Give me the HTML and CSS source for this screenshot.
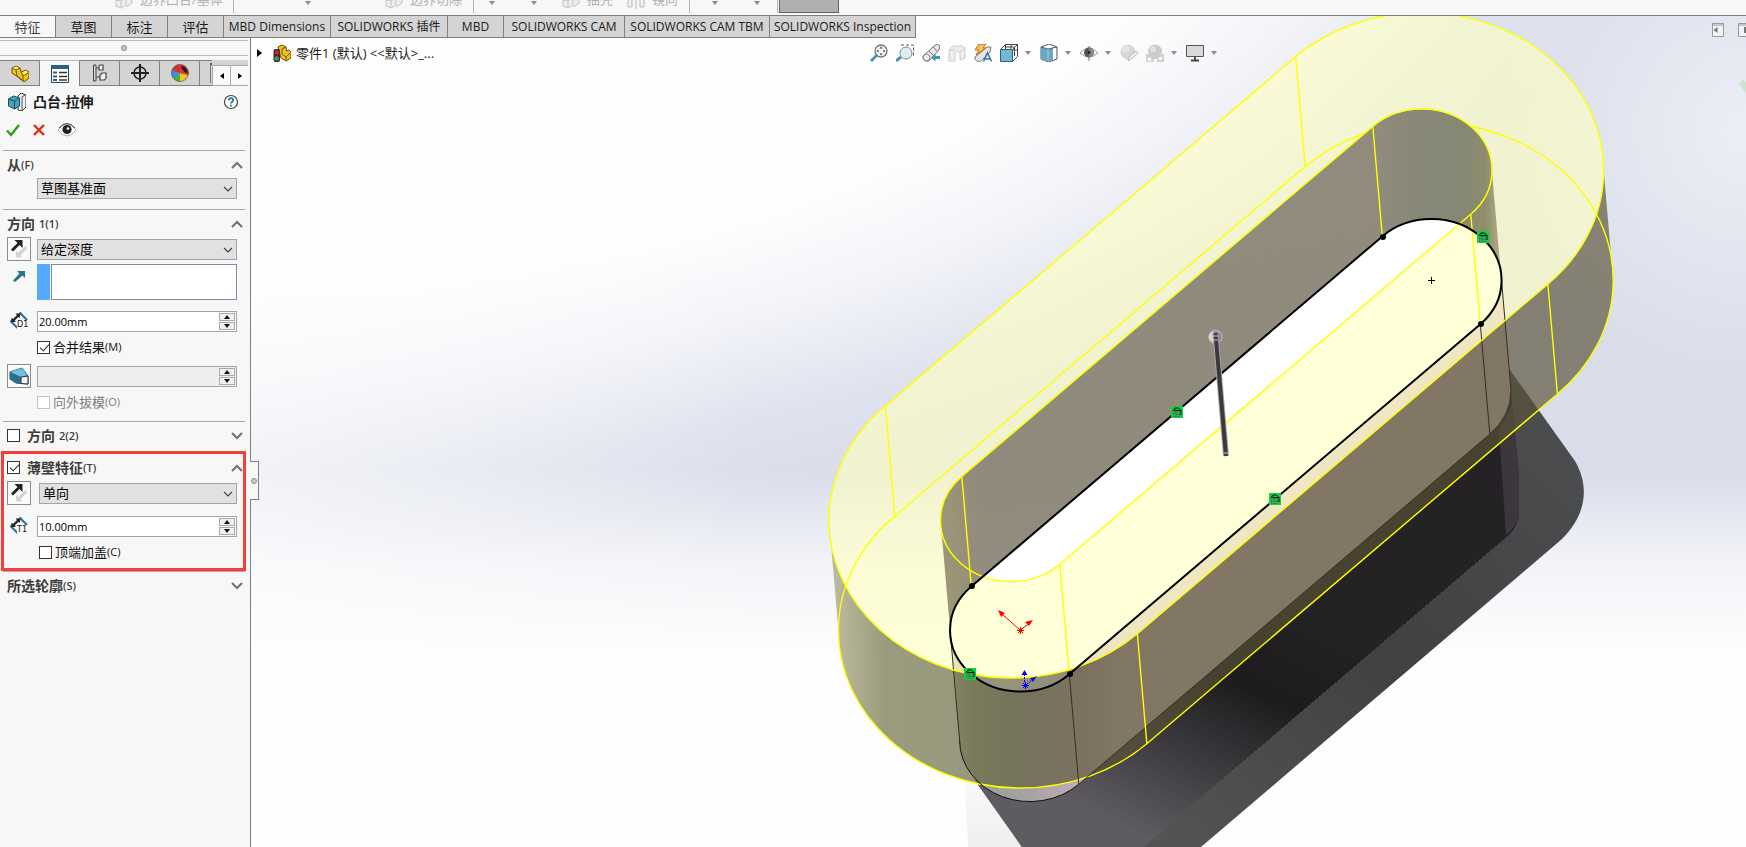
FILE: index.html
```html
<!DOCTYPE html>
<html lang="zh-CN">
<head>
<meta charset="utf-8">
<title>零件1 - 凸台-拉伸</title>
<link rel="stylesheet" href="styles.css">
</head>
<body>
<svg class="defs" aria-hidden="true">
  <symbol id="i-swap" viewBox="0 0 22 22">
    <path d="M8 19.500v-7l2.300 2.200L17.500 8l2 2-7 7.200 2.300 2.300z" fill="#d4d4d4"/>
    <path d="M6.500 2h8v8l-2.900-2.900L5 13.500 3 11.500l6.500-6.500z" fill="#222"/>
  </symbol>
  <symbol id="i-chev-up" viewBox="0 0 12 8"><path d="M1 7l5-5 5 5" fill="none" stroke="#707070" stroke-width="2"/></symbol>
  <symbol id="i-chev-down" viewBox="0 0 12 8"><path d="M1 1l5 5 5-5" fill="none" stroke="#707070" stroke-width="2"/></symbol>
  <symbol id="i-arrow-sel" viewBox="0 0 10 6"><path d="M1 1l4 4 4-4" fill="none" stroke="#444" stroke-width="1.200"/></symbol>
  <symbol id="i-up" viewBox="0 0 6 4"><path d="M0 4l3-4 3 4z" fill="#111"/></symbol>
  <symbol id="i-down" viewBox="0 0 6 4"><path d="M0 0l3 4 3-4z" fill="#111"/></symbol>
  <symbol id="i-caret" viewBox="0 0 6 4"><path d="M0 0h6l-3 4z" fill="#8c8c8c"/></symbol>
  <symbol id="i-dim" viewBox="0 0 18 18">
    <path d="M10 1l7 7M1 9.500l7 7" stroke="#28708e" stroke-width="2" fill="none"/>
    <path d="M0 10l3-3M9 2l2-2" stroke="#28708e" stroke-width="1.500"/>
    <path d="M5.500 1.500h4.500v4.500L8.500 4.700 4.700 8.500 6 10H1.500V5.500L3 7 7 3z" fill="#222"/>
  </symbol>
  <symbol id="i-faded" viewBox="0 0 18 18">
    <path d="M1 9l5-5 5 2v8l-5 3-5-2zM6 10v7M1 9l5 1 5-4M8 3l5-2 4 2v9l-6 4" fill="#eee" stroke="#c4c4c4"/>
  </symbol>
  <symbol id="i-part" viewBox="0 0 18 18">
    <path d="M1 4l4-2 4 2 1 4 5-2 3 2v6l-5 4L7 13 1 9z" fill="#f2c21d" stroke="#6d5000"/>
    <path d="M1 4l4 2 4-2M5 6l1 6 6 5M12 12l5-3M12 12v5M10 8l2 4" fill="none" stroke="#6d5000"/>
    <path d="M2 4l3-1.500L8 4 5 5.500zM11 8.500l4-2 2 1.500-4 3z" fill="#ffe777"/>
  </symbol>
  <symbol id="g-box" viewBox="0 0 12 12">
    <rect width="12" height="12" fill="#10cf43"/>
    <path d="M2.500 5.500h6v5h-6zM4.500 3v5.500h6M2.500 8h6M5.500 5.500v5" fill="none" stroke="#4b7a50" stroke-width=".8"/>
    <path d="M2 4.500L4 2h3.500L10 4.500H5L2.500 4M10 4.500V9" fill="none" stroke="#0a170c"/>
  </symbol>
</svg>

<header class="ribbon">
  <div class="ribbon-group rg1"><span class="cmd"><svg><use href="#i-faded"/></svg>边界凸台/基体</span></div>
  <div class="ribbon-group rg2"><svg class="caret"><use href="#i-caret"/></svg><span class="cmd"><svg><use href="#i-faded"/></svg>边界切除</span></div>
  <div class="ribbon-group rg3"><svg class="caret"><use href="#i-caret"/></svg><svg class="caret"><use href="#i-caret"/></svg><span class="cmd"><svg><use href="#i-faded"/></svg>抽壳</span><span class="cmd"><svg viewBox="0 0 18 18"><path d="M1 16V5h6v3H5v8zM17 16V5h-6v3h2v8zM9 2v16" fill="#eee" stroke="#bbb"/></svg>镜向</span></div>
  <div class="ribbon-group rg4"><svg class="caret"><use href="#i-caret"/></svg><svg class="caret"><use href="#i-caret"/></svg></div>
  <div class="ribbon-active"></div>
</header>

<main class="workspace">
  <svg class="canvas" viewBox="0 16 1746 831" preserveAspectRatio="xMaxYMin slice" aria-label="模型视图">
    <defs>
      <radialGradient id="bgA" gradientUnits="userSpaceOnUse" cx="0" cy="0" r="1.400" gradientTransform="translate(300 -300) scale(1007 600)">
        <stop offset=".69" stop-color="#fefefe"/><stop offset=".8" stop-color="#f3f4f9"/><stop offset=".914" stop-color="#dfe3ee"/><stop offset="1" stop-color="#d9ddea"/>
      </radialGradient>
      <linearGradient id="bgL" gradientUnits="userSpaceOnUse" x1="251" y1="0" x2="750" y2="0">
        <stop offset="0" stop-color="#fefefe" stop-opacity=".6"/><stop offset="1" stop-color="#fefefe" stop-opacity="0"/>
      </linearGradient>
      <linearGradient id="bgB" gradientUnits="userSpaceOnUse" x1="0" y1="470" x2="0" y2="660">
        <stop offset="0" stop-color="#fefefe" stop-opacity="0"/><stop offset=".5" stop-color="#fefefe" stop-opacity=".7"/><stop offset="1" stop-color="#fefefe"/>
      </linearGradient>
      <radialGradient id="bgC" gradientUnits="userSpaceOnUse" cx="1746" cy="130" r="260">
        <stop offset="0" stop-color="#f4f6fa" stop-opacity=".7"/><stop offset="1" stop-color="#f4f6fa" stop-opacity="0"/>
      </radialGradient>
      <linearGradient id="shOuter" gradientUnits="userSpaceOnUse" x1="1580" y1="450" x2="1180" y2="847">
        <stop offset="0" stop-color="#4b4d4f"/><stop offset=".5" stop-color="#404141"/><stop offset="1" stop-color="#535353"/>
      </linearGradient>
      <linearGradient id="shInner" gradientUnits="userSpaceOnUse" x1="1290" y1="600" x2="1170" y2="850">
        <stop offset="0" stop-color="#242225"/><stop offset=".35" stop-color="#1e1b1f"/><stop offset="1" stop-color="#5e5c60"/>
      </linearGradient>
      <linearGradient id="shSoft" gradientUnits="userSpaceOnUse" x1="0" y1="780" x2="0" y2="847">
        <stop offset="0" stop-color="#f9f9f9"/><stop offset="1" stop-color="#efefef"/>
      </linearGradient>
      <linearGradient id="body" gradientUnits="userSpaceOnUse" x1="950" y1="0" x2="1512" y2="0">
        <stop offset="0" stop-color="#c6c4b4"/><stop offset=".04" stop-color="#a3a498"/><stop offset=".1" stop-color="#9fa29c"/><stop offset=".15" stop-color="#a8a2a6"/><stop offset=".23" stop-color="#c0afb6"/><stop offset=".3" stop-color="#d3c1c2"/><stop offset="1" stop-color="#d3bfc2"/>
      </linearGradient>
      <linearGradient id="outer" gradientUnits="userSpaceOnUse" x1="829" y1="0" x2="1613" y2="0">
        <stop offset="0" stop-color="#a7a37a"/><stop offset=".03" stop-color="#8b8a5c"/><stop offset=".07" stop-color="#6a6b3e"/><stop offset=".18" stop-color="#65663f"/><stop offset=".32" stop-color="#5a5236"/><stop offset="1" stop-color="#5a5238"/>
      </linearGradient>
      <linearGradient id="inner" gradientUnits="userSpaceOnUse" x1="940" y1="0" x2="1502" y2="0">
        <stop offset="0" stop-color="#968e6a"/><stop offset=".07" stop-color="#878170"/><stop offset=".78" stop-color="#888270"/><stop offset=".84" stop-color="#7f7e6c"/><stop offset=".93" stop-color="#7d7f68"/><stop offset=".97" stop-color="#858360"/><stop offset="1" stop-color="#aca880"/>
      </linearGradient>
      <path id="slot" d="M971.300 586.400L1382.300 236.400A70.200 61.200 0 0 1 1480.300 324.200L1069.300 674.200A70.200 61.200 0 0 1 971.300 586.400Z"/>
      <path id="rim" d="M893.800 516.900L1304.800 166.900A181 157 0 0 1 1557.800 393.700L1146.800 743.700A181 157 0 0 1 893.800 516.900Z"/>
    </defs>
    <rect width="1746" height="847" fill="url(#bgA)"/>
    <rect width="1746" height="847" fill="url(#bgL)"/>
    <rect width="1746" height="847" fill="url(#bgC)"/>
    <rect width="1746" height="847" fill="url(#bgB)"/>

    <path d="M963 740L968 847H1030L985 780Z" fill="url(#shSoft)"/>
    <path d="M1505 363L1575 461C1590 487 1586 515 1562 539L1201 847H1022L975 780Z" fill="url(#shOuter)"/>
    <path d="M978 785L1505 363L1511 390L1519 478V513C1518 525 1513 531 1507 537L1143 847H1022Z" fill="url(#shInner)"/>
    <path d="M1499 430L1506 535C1514 529 1519 520 1519 510V478L1512 405Z" fill="#3d373d"/>
    <path d="M1507 537L1143 847" stroke="#666" stroke-dasharray="2 3" fill="none" opacity=".7"/>

    <path d="M950.100 630.300L959.600 740.300A70.200 61.200 0 0 0 1078.800 784.200L1489.800 434.200A70.200 61.200 0 0 0 1511 390.300L1501.500 280.300L1431 250L1020 600Z" fill="url(#body)"/>
    <use href="#slot" fill="#fff"/>
    <path d="M828.900 520.300L838.400 630.300A181.900 157.800 0 0 0 1146.800 743.700L1557.800 393.700A181.900 157.800 0 0 0 1613.200 280.300L1603.700 170.300A181.900 157.800 0 0 1 1548.300 283.700L1137.300 633.700A181.900 157.800 0 0 1 828.900 520.300Z" fill="url(#outer)" fill-opacity=".67"/>
    <path fill-rule="evenodd" fill="#ffffc0" fill-opacity=".62" d="M884.300 406.900L1295.300 56.900A181 157 0 0 1 1548.300 283.700L1137.300 633.700A181 157 0 0 1 884.300 406.900ZM961.800 476.400L1372.800 126.400A70.200 61.200 0 0 1 1470.800 214.200L1059.800 564.200A70.200 61.200 0 0 1 961.800 476.400Z"/>
    <use href="#rim" class="edge-new"/>
    <path d="M940.600 520.300A70.200 61.200 0 0 1 961.800 476.400L1372.800 126.400A70.200 61.200 0 0 1 1491.800 170.300L1501.500 280.300A70.200 61.200 0 0 0 1382.300 236.400L971.300 586.400A70.200 61.200 0 0 0 950.100 630.300Z" fill="url(#inner)" fill-opacity=".9"/>
    <g class="edge-body">
      <path d="M950.100 630.300L959.600 740.300M1069.300 674.200L1078.800 784.200M1480.300 324.200L1489.800 434.200M1501.500 280.300L1511 390.300A70.200 61.200 0 0 1 1489.800 434.200L1078.800 784.200"/>
      <path d="M959.600 740.300A70.200 61.200 0 0 0 1078.800 784.200" stroke="#111"/>
    </g>
    <g class="edge-new">
      <use href="#rim" transform="translate(-9.500 -110)"/>
      <use href="#slot" transform="translate(-9.500 -110)"/>
      <path d="M885.500 408l9.500 110M1295.800 58.300l9.500 110M1547.800 283.300l9.500 110M1137.300 633.300l9.500 110M961.800 476.400l9.500 110M1059.800 564.200l9.500 110M1372.800 126.400l9.500 110M1470.800 214.200l9.500 110"/>
    </g>
    <use href="#slot" class="edge-sketch"/>
    <g fill="#000"><circle cx="972" cy="586" r="3"/><circle cx="1070" cy="674" r="3"/><circle cx="1383" cy="237" r="3"/><circle cx="1481" cy="324" r="3"/></g>
    <use href="#g-box" x="1171" y="406" width="12" height="12"/>
    <use href="#g-box" x="1269" y="493" width="12" height="12"/>
    <use href="#g-box" x="964" y="668" width="12" height="12"/>
    <use href="#g-box" x="1477" y="231" width="12" height="12"/>
    <path d="M1428 280.500h7M1431.500 277v7" stroke="#000"/>
    <circle cx="1215.500" cy="337" r="6.500" fill="#8b838f" stroke="#c9c9cc"/>
    <path d="M1209.500 340a6 6 0 0 1 4-9v12z" fill="#d5d2d2"/>
    <path d="M1215.500 333L1226 456" stroke="#a9a6aa" stroke-width="6"/>
    <path d="M1215.500 333L1226 456" stroke="#3d383f" stroke-width="4"/>
    <path d="M1213 336h5M1213 340h5M1223.500 453h5" stroke="#c9c6ca"/>
    <g stroke="#f00" fill="#f00"><path d="M1020 630L1002 614M1020 630L1030 623M1017 630.500h7M1020.500 627v7M1018 628l5 5M1023 628l-5 5"/><path d="M998 610l3 7 4-4zM1033 620l-8 2 4 4z" stroke="none"/></g>
    <g stroke="#00f" fill="#00f"><path d="M1025.500 682v7M1022 685.500h7M1023 683l5 5M1028 683l-5 5"/><path d="M1024.500 682V674M1027 684l10-8" stroke-dasharray="2 1"/><path d="M1024.500 670l-3 5h6zM1036 677l-6 1 3 4z" stroke="none"/></g>
    <path d="M1739 84l4-5 3 3v11z" fill="#cce4cf"/>
  </svg>

  <nav class="tabs">
    <button class="tab on">特征</button><button class="tab">草图</button><button class="tab">标注</button><button class="tab">评估</button><button class="tab">MBD Dimensions</button><button class="tab">SOLIDWORKS 插件</button><button class="tab">MBD</button><button class="tab">SOLIDWORKS CAM</button><button class="tab">SOLIDWORKS CAM TBM</button><button class="tab">SOLIDWORKS Inspection</button>
  </nav>

  <div class="columns">
    <aside class="panel">
      <div class="grip"><i></i></div>
      <div class="ptabs">
        <button class="ptab" aria-label="设计树"><svg><use href="#i-part"/></svg></button>
        <button class="ptab on" aria-label="属性"><svg viewBox="0 0 18 18"><path d="M.5.500h17v17H.500z" fill="#fff" stroke="#244552"/><path d="M0 0h18v4H0z" fill="#28627c"/><path d="M2 6.500h4v2H2zM2 10.500h4v2H2zM2 14h4v2H2z" fill="#28627c"/><path d="M8 7.500h8M8 11.500h8M8 15h8" stroke="#333" stroke-width="1.300"/></svg></button>
        <button class="ptab" aria-label="配置"><svg viewBox="0 0 18 18"><path d="M5 17V1H2.500v16zM5 4h4M5 13h4" fill="none" stroke="#444"/><path d="M8 2l1-1h3v5H8zM9 11l2-2h4v5l-1.500 2H9z" fill="#f4f4f4" stroke="#444" stroke-width="1.200"/></svg></button>
        <button class="ptab" aria-label="尺寸"><svg viewBox="0 0 18 18"><circle cx="9" cy="9" r="6" fill="none" stroke="#222" stroke-width="1.500"/><path d="M9 0v18M0 9h18" stroke="#222" stroke-width="2"/></svg></button>
        <button class="ptab" aria-label="外观"><svg viewBox="0 0 18 18"><circle cx="9" cy="9" r="8.500" fill="#2e75d8"/><path d="M9 9L1 6A8.500 8.500 0 0 1 9 .500z" fill="#e02d24"/><path d="M9 9L1 6a9 9 0 0 0 1 8z" fill="#3f8be0"/><path d="M9 9l-7 5a9 9 0 0 0 7 3.500z" fill="#46b040"/><path d="M9 9v8.500A8.500 8.500 0 0 0 17 11z" fill="#f5c423"/><path d="M9 9V.500A8.500 8.500 0 0 1 17.400 11z" fill="#e23a2a"/><path d="M10 2c4 0 7 4 6.500 7.500-3-1-6-4-6.500-7.500z" fill="#211a1c"/><circle cx="9" cy="9" r="8.500" fill="none" stroke="#555" stroke-width=".6"/></svg></button>
        <span class="ptab-rest"><i></i></span>
        <span class="pscroll"><button aria-label="向左"><svg viewBox="0 0 4 6"><path d="M4 0v6L0 3z"/></svg></button><button aria-label="向右"><svg viewBox="0 0 4 6"><path d="M0 0v6l4-3z"/></svg></button></span>
      </div>
      <div class="title"><svg class="ic18" viewBox="0 0 18 18"><path d="M10 3l3-3 5 2v12l-4 4-4-1z" fill="#eee" stroke="#333"/><path d="M14 4l3-2M14 4v13" stroke="#555"/><path d="M.500 6l5-3 6 2v8l-5 3-6-3z" fill="#4aa0bf" stroke="#174e66"/><path d="M.500 6l6 2 5-3M6.500 8v8" fill="none" stroke="#174e66"/></svg><h1>凸台-拉伸</h1>
        <button class="help" aria-label="帮助"><svg viewBox="0 0 16 16"><circle cx="8" cy="8" r="6.500" fill="#fff" stroke="#444" stroke-width="1.200"/><path d="M5.800 6.300c.2-3 4.500-2.700 4.400-.2 0 1.600-2 1.700-2.100 3.400M8 10.800v1.700" fill="none" stroke="#247ba0" stroke-width="1.900"/></svg></button></div>
      <div class="actions">
        <button aria-label="确定"><svg viewBox="0 0 14 14"><path d="M1 7.500l4 4.500L13 2" fill="none" stroke="#2f9e10" stroke-width="2.400"/></svg></button>
        <button aria-label="取消"><svg viewBox="0 0 14 14"><path d="M2 2l10 10M12 2L2 12" stroke="#e02a0c" stroke-width="2.300"/></svg></button>
        <button aria-label="预览"><svg class="eye" viewBox="0 0 18 14"><path d="M0 7Q9-5 18 7 9 19 0 7z" fill="#fff" stroke="#aaa"/><path d="M1 5Q9-4 17 5" fill="none" stroke="#444"/><circle cx="9" cy="6.500" r="4.600" fill="#222"/><circle cx="10" cy="5.500" r="1.300" fill="#fff"/></svg></button>
      </div>

      <section class="sec">
        <h2>从<small>(F)</small><svg class="chev"><use href="#i-chev-up"/></svg></h2>
        <div class="row low"><span></span><label class="sel"><select aria-label="开始条件"><option>草图基准面</option></select><svg><use href="#i-arrow-sel"/></svg></label></div>
      </section>
      <section class="sec">
        <h2>方向<small class="sp">1(1)</small><svg class="chev"><use href="#i-chev-up"/></svg></h2>
        <div class="row"><button class="sq" aria-label="反向"><svg><use href="#i-swap"/></svg></button><label class="sel"><select aria-label="终止条件"><option>给定深度</option></select><svg><use href="#i-arrow-sel"/></svg></label></div>
        <div class="row list-row"><svg class="dir" viewBox="0 0 12 12"><path d="M4 1h8v7L9.500 5.500 2 12 0 10.500 6.500 3.500z" fill="#28708e"/></svg><div class="list"><i></i><textarea aria-label="拉伸方向"></textarea></div></div>
        <div class="row wide-gap"><span class="dim"><svg><use href="#i-dim"/></svg><b>D1</b></span><span class="spin"><input aria-label="深度" value="20.00mm"><button aria-label="增加"><svg><use href="#i-up"/></svg></button><button aria-label="减少"><svg><use href="#i-down"/></svg></button></span></div>
        <label class="chk"><input type="checkbox" checked>合并结果<small>(M)</small></label>
        <div class="row draft-row"><button class="sq" aria-label="拔模"><svg viewBox="1 1 22 22"><path d="M3 8l12-4 6 8v8l-12-1-6-4z" fill="#4596b8" stroke="#1c4d63"/><path d="M3 8l12-4 5 7-6 2z" fill="#6ec2e2"/><path d="M3 8l11 5v6.500L9 19l-6-4z" fill="#28708e"/><path d="M14 13l7-1v8l-7-.5z" fill="#f2f2f2" stroke="#333"/></svg></button><span class="spin off"><input aria-label="拔模角度" disabled><button aria-label="增加"><svg><use href="#i-up"/></svg></button><button aria-label="减少"><svg><use href="#i-down"/></svg></button></span></div>
        <label class="chk off"><input type="checkbox" disabled>向外拔模<small>(O)</small></label>
      </section>
      <section class="sec sec-dir2">
        <h2><label><input type="checkbox">方向<small class="sp">2(2)</small></label><svg class="chev"><use href="#i-chev-down"/></svg></h2>
      </section>
      <section class="thin">
        <h2><label><input type="checkbox" checked>薄壁特征<small>(T)</small></label><svg class="chev"><use href="#i-chev-up"/></svg></h2>
        <div class="row"><button class="sq" aria-label="反向"><svg><use href="#i-swap"/></svg></button><label class="sel inset"><select aria-label="薄壁类型"><option>单向</option></select><svg><use href="#i-arrow-sel"/></svg></label></div>
        <div class="row wide-gap"><span class="dim"><svg><use href="#i-dim"/></svg><b>T1</b></span><span class="spin"><input aria-label="厚度" value="10.00mm"><button aria-label="增加"><svg><use href="#i-up"/></svg></button><button aria-label="减少"><svg><use href="#i-down"/></svg></button></span></div>
        <label class="chk inset"><input type="checkbox">顶端加盖<small>(C)</small></label>
      </section>
      <section class="sec last">
        <h2>所选轮廓<small>(S)</small><svg class="chev"><use href="#i-chev-down"/></svg></h2>
      </section>
    </aside>

    <div class="view">
      <button class="handle" aria-label="折叠面板"><i></i></button>
      <div class="tree"><svg class="tri" viewBox="0 0 5 8"><path d="M0 0v8l5-4z"/></svg>
        <svg class="ic18" viewBox="0 0 18 18"><path d="M5 3l4-2 4 2 .5 4L16 6l2 2v6l-5 3-5-3z" fill="#f2c21d" stroke="#6d5000"/><path d="M9 5v5l4 3v4M13 13l4-4M9 5l4-2" fill="none" stroke="#6d5000"/><rect x=".5" y="5" width="6.500" height="13" rx="2" fill="#3c2b2b"/><circle cx="3.700" cy="8.500" r="2.300" fill="#d22"/><circle cx="3.700" cy="14.500" r="2.300" fill="#4a9a4a"/></svg>
        <span>零件1 (默认) &lt;&lt;默认&gt;_...</span></div>
      <div class="hud">
        <button aria-label="整屏显示全图"><svg viewBox="0 0 18 18"><path d="M1 17l6-6" stroke="#4b93b5" stroke-width="3"/><circle cx="11" cy="7" r="6" fill="#f1f5f7" stroke="#767676" stroke-width="1.300"/><path d="M11 2.500l1.500 2h-3zM11 11.500l1.500-2h-3zM6.500 7l2-1.500v3zM15.500 7l-2-1.500v3z" fill="#444"/></svg></button>
        <button aria-label="局部放大"><svg viewBox="0 0 18 18"><path d="M5 1h12.500v11" fill="none" stroke="#555" stroke-dasharray="3 2"/><path d="M0 17l5-4" stroke="#4b93b5" stroke-width="3"/><circle cx="10" cy="9" r="6" fill="#dfeff0" stroke="#888"/></svg></button>
        <button aria-label="上一视图"><svg viewBox="0 0 18 18"><path d="M1 12L12 2l3-2 3 2-1 4-9 10c-3 3-8 0-7-4z" fill="#e4e4e4" stroke="#777"/><circle cx="4.500" cy="13.500" r="3.300" fill="#f4f4f4" stroke="#888"/><path d="M7 7l4 4M11 3l4 4" stroke="#777"/><path d="M9 13.500l4.500-4v2.500H18v3h-4.500v2.500z" fill="#4b93b5"/></svg></button>
        <button aria-label="剖面视图"><svg viewBox="0 0 18 18"><path d="M1 6l4-4h9l3 2v10l-5 2V9c-2-2-4-2-5 0v8H1z" fill="#ededed" stroke="#ccc"/><path d="M1 6h6M12 8l5-4" stroke="#ccc" fill="none"/></svg></button>
        <button aria-label="动态注解视图"><svg viewBox="0 0 18 18"><path d="M1 13L13 3l4 0-1 5-9 9c-3 2-7-1-6-4z" fill="#e4e4e4" stroke="#777"/><path d="M5 0h7L9 4h3L2 11l3-5H1z" fill="#f8c25a" stroke="#c56a1b"/><path d="M9.500 17.500L13.500 9l4 8.500M11 15h5.500" stroke="#33799c" stroke-width="1.600" fill="none"/></svg></button>
        <button aria-label="视图定向"><svg viewBox="0 0 18 18"><path d="M.500 5.500l5-5h12v12l-5 5M5.500.500v5M17.500.500l-5 5M11 .500v5M5.500 3h9v9M17 6h-4" fill="#fff" stroke="#444"/><path d="M.500 5.500h12v12H.500z" fill="#74b7d3" stroke="#2f617a"/></svg></button><svg class="caret"><use href="#i-caret"/></svg>
        <button aria-label="显示样式"><svg viewBox="0 0 18 18"><path d="M1 3l8-3 8 3v12l-8 3-8-3z" fill="#fff" stroke="#555"/><path d="M1 3l6 2v13l-6-3zM9 5l4-1v12l-4 2z" fill="#62aac8"/><path d="M1 3l7 2 9-2M8 5v12" fill="none" stroke="#3a6a80"/></svg></button><svg class="caret"><use href="#i-caret"/></svg>
        <button aria-label="隐藏/显示"><svg viewBox="0 0 18 18"><path d="M0 9Q9-1 18 9 9 17 0 9z" fill="#fff" stroke="#999"/><circle cx="9" cy="8.500" r="5" fill="#555"/><path d="M9 3.500v10a5 5 0 0 0 0-10z" fill="#8b8b8b"/><path d="M9 2v15" stroke="#777"/><circle cx="9" cy="8.500" r="1.500" fill="#222"/></svg></button><svg class="caret"><use href="#i-caret"/></svg>
        <button aria-label="编辑外观"><svg viewBox="0 0 18 18"><circle cx="8" cy="8" r="7.500" fill="#d6d6d6"/><circle cx="6" cy="5" r="3.500" fill="#e4e4e4"/><path d="M8 17l1-4 7-6 2 2-7 6z" fill="#f2f2f2" stroke="#b8b8b8"/></svg></button>
        <button aria-label="应用布景"><svg viewBox="0 0 18 18"><path d="M0 10h18v8H0z" fill="#d2d2d2"/><path d="M2 14h3v3H2zM8 15h3v3H8zM13 13h3v3h-3z" fill="#fff"/><circle cx="9" cy="7.500" r="7" fill="#ccc"/><circle cx="7" cy="5" r="3" fill="#e0e0e0"/></svg></button><svg class="caret"><use href="#i-caret"/></svg>
        <button aria-label="视图设定"><svg viewBox="0 0 18 18"><path d="M.500 1.500h17v11H.500z" fill="#d9d9d9" stroke="#555"/><path d="M9 13v3M5 16.500h8" stroke="#444" stroke-width="1.800"/></svg></button><svg class="caret"><use href="#i-caret"/></svg>
      </div>
      <div class="wins"><button aria-label="收起"><svg viewBox="0 0 12 14"><path d="M.500.500h11v13H.500zM.500 2h11" fill="#f3f4f6" stroke="#999"/><path d="M5.500 4v6l-4-3z" fill="#777"/></svg></button><button aria-label="展开"><svg viewBox="0 0 12 14"><path d="M.500.500h11v13H.500zM.500 2h11" fill="#f3f4f6" stroke="#999"/><path d="M6 4h2v6H6z" fill="#777"/></svg></button></div>
    </div>
  </div>
</main>
</body>
</html>
```
FILE: styles.css
```css
* { box-sizing: border-box; }
html, body { height: 100%; }
body {
  margin: 0;
  display: flex;
  flex-direction: column;
  overflow: hidden;
  background: #f7f7f7;
  color: #1b1b1b;
  font: 12px/16px "Open Sans", "Noto Sans CJK SC", sans-serif;
}
button { border: 0; padding: 0; background: none; font: inherit; color: inherit; display: flex; align-items: center; justify-content: center; }
svg { display: block; }
.defs { position: absolute; width: 0; height: 0; }
.caret { width: 6px; height: 4px; flex: none; }
.ic18 { width: 18px; height: 18px; flex: none; }

/* command ribbon */
.ribbon { display: flex; flex: none; height: 16px; overflow: hidden; border-bottom: 1px solid #7f7f7f; }
.ribbon-group { display: flex; justify-content: space-between; align-items: flex-start; height: 13px; border-right: 1px solid #b4b4b4; }
.ribbon-group .caret { margin-top: 1px; }
.rg1 { width: 234px; padding: 0 11px 0 115px; }
.rg2 { width: 240px; padding: 0 11px 0 71px; }
.rg3 { width: 216px; padding: 0 11px 0 15px; }
.rg4 { width: 88px; padding: 0 17px 0 22px; }
.cmd { display: flex; gap: 7px; margin-top: -11px; font-size: 13px; line-height: 20px; color: #b0b0b0; white-space: nowrap; }
.rg3 .caret + .caret { margin-left: 22px; }
.rg3 .cmd:nth-child(3) { margin-left: 10px; }
.cmd svg { width: 18px; height: 18px; margin-top: 2px; }
.ribbon-active { width: 60px; height: 13px; margin-left: 1px; background: #b0b0b0; border: 1px solid #666; border-top: 0; }

/* workspace */
.workspace { position: relative; flex: 1; min-height: 0; display: flex; flex-direction: column; }
.canvas { position: absolute; inset: 0; width: 100%; height: 100%; }
.edge-new { fill: none; stroke: #ff0; stroke-width: 1.4; }
.edge-body { fill: none; stroke: #35301f; stroke-width: 1; }
.edge-sketch { fill: none; stroke: #000; stroke-width: 2; }

.tabs { position: relative; display: grid; grid-template-columns: 56px 56px 56px 56px 107px 117px 56px 121px 145px 146px; align-self: flex-start; height: 22px; }
.tab { background: #d4d4d4; border-right: 1px solid #7f7f7f; border-bottom: 1px solid #7f7f7f; white-space: nowrap; }
.tab:nth-child(-n+4) { font-size: 13px; }
.tab.on { background: #f7f7f7; color: #444; }
.columns { position: relative; display: flex; flex: 1; min-height: 0; }

/* property panel */
.panel { width: 251px; flex: none; background: #f7f7f7; border-right: 1px solid #7f7f7f; padding-top: 2px; }
.grip { display: flex; align-items: center; justify-content: center; height: 16px; margin-right: 2px; border: solid #bcbcbc; border-width: 1px 0; }
.grip i, .handle i { width: 6px; height: 6px; border: 1px solid #888; border-radius: 50%; background: #ccc; }
.ptabs { display: flex; height: 26px; margin: 4px 2px 0 0; }
.ptab { width: 40px; flex: none; background: #d4d4d4; border: solid #7f7f7f; border-width: 1px 1px 1px 0; }
.ptab.on { background: #f7f7f7; border-bottom: 0; border-top-color: #bbb; }
.ptab svg { width: 18px; height: 18px; }
.ptab-rest { width: 12px; flex: none; background: #d4d4d4; border: solid #7f7f7f; border-width: 1px 0; padding: 2px 0 0 10px; }
.ptab-rest i { display: block; height: 20px; border-top: 2px solid #28627c; border-left: 1px solid #777; }
.pscroll { display: flex; flex: 1; border-top: 5px solid #d4d4d4; }
.pscroll button { flex: 1; border: 1px solid #aaa; border-right-width: 0; background: #f9f9f9; }
.pscroll svg { width: 4px; height: 6px; }
.title { display: flex; align-items: center; height: 32px; padding: 0 11px 0 8px; }
.title h1 { margin: 0 auto 0 7px; font-size: 14px; font-weight: 600; line-height: 20px; }
.help svg { width: 16px; height: 16px; }
.actions { display: flex; gap: 12px; height: 24px; padding-left: 6px; }
.actions svg { width: 14px; height: 14px; }
.actions .eye { width: 18px; }

.sec { margin: 10px 5px 0 3px; padding: 0 8px 0 4px; border-top: 1px solid #a8a8a8; }
.actions + .sec { margin-top: 8px; }
h2 { display: flex; align-items: center; height: 27px; margin: 0; font-size: 14px; line-height: 20px; font-weight: 600; color: #3d3d3d; }
h2 label { display: flex; align-items: center; }
h2 input { margin-right: 7px; }
small { font-size: 11px; }
.sp { margin-left: 4px; }
.chev { width: 12px; height: 8px; margin: 0 -6px 0 auto; }
.row { display: grid; grid-template-columns: 24px 1fr; column-gap: 6px; align-items: center; height: 24px; }
.row.low { height: 21px; }
.sq { width: 24px; height: 24px; border: 1px solid #8c8c8c; background: #fafafa; }
.sq svg { width: 22px; height: 22px; flex: none; }
.sel { position: relative; display: block; height: 21px; }
.sel.inset { margin-left: 2px; }
.sel select { width: 100%; height: 21px; margin: 0; padding: 0 3px; appearance: none; border: 1px solid #a5a5a5; border-radius: 0; background: #e1e1e1; color: #000; font: 13px/19px "Open Sans", "Noto Sans CJK SC", sans-serif; }
.sel svg { position: absolute; right: 4px; top: 8px; width: 10px; height: 6px; }
.row.list-row { height: 36px; margin-top: 3px; align-items: start; }
.dir { width: 12px; height: 12px; margin: 6px 0 0 6px; }
.list { display: grid; grid-template-columns: 13px 1fr; gap: 1px; height: 36px; }
.list i { background: #55a9ff; }
.list textarea { width: 100%; height: 36px; resize: none; border: 1px solid #8388a5; background: #fff; }
.row.wide-gap { margin-top: 9px; }
.dim { position: relative; width: 18px; height: 18px; margin-left: 3px; }
.dim svg { width: 18px; height: 18px; }
.dim b { position: absolute; left: 7px; bottom: 1px; font: 8px/8px "DejaVu Sans", sans-serif; color: #111; background: #f7f7f7; }
.spin { display: grid; grid-template-columns: 1fr 16px; grid-template-rows: 8px 8px; align-content: center; row-gap: 1px; height: 21px; padding-right: 1px; border: 1px solid #a5a5a5; background: #fff; }
.spin input { grid-row: 1 / 3; width: 100%; height: 17px; padding: 0 1px; border: 0; background: none; font: 11px/17px "Open Sans", sans-serif; color: #000; }
.spin button { border: 1px solid #aaa; background: #f0f0f0; }
.spin svg { width: 6px; height: 4px; flex: none; }
.spin.off { background: #eee; }
.chk { display: flex; align-items: center; height: 24px; margin: 2px 0 0 30px; font-size: 13px; color: #111; }
.chk input { margin-right: 3px; }
.chk.off { color: #7d7d7d; }
.chk.inset { margin-left: 32px; }
.draft-row { margin-top: 5px; }
input[type="checkbox"] { appearance: none; flex: none; width: 13px; height: 13px; margin-block: 0; margin-left: 0; border: 1px solid #333; background: #fff; }
input[type="checkbox"]:checked::after { content: ""; display: block; width: 8px; height: 4px; margin: 2px 0 0 2px; border: solid #333; border-width: 0 0 1px 1px; transform: rotate(-47deg); }
input[type="checkbox"]:disabled { border-color: #c4c4c4; }
.sec.sec-dir2 { margin-top: 7px; }
.thin { margin: 2px 4px 0 1px; padding: 0 6px 4px 3px; border: 3px solid #fb3a3a; }
.thin h2 { height: 27px; }
.sec.last { margin-top: 0; }

/* graphics area overlays */
.view { position: relative; flex: 1; min-width: 0; display: flex; align-items: flex-start; padding-top: 5px; }
.handle { position: absolute; left: -1px; top: 423px; width: 9px; height: 39px; border: 1px solid #7f7f7f; border-left: 0; background: #f7f7f7; }
.tree { display: flex; align-items: center; width: 619px; height: 20px; padding-left: 6px; font-size: 13px; }
.tri { width: 5px; height: 8px; margin-right: 11px; }
.tree .ic18 { margin-right: 5px; }
.hud { display: flex; align-items: center; gap: 8px; height: 20px; }
.hud button, .hud button svg { width: 18px; height: 18px; }
.hud .caret { margin: 0 1px 0 -1px; }
.wins { display: flex; gap: 14px; margin: -20px -4px 0 auto; }
.wins svg { width: 12px; height: 14px; }
```
